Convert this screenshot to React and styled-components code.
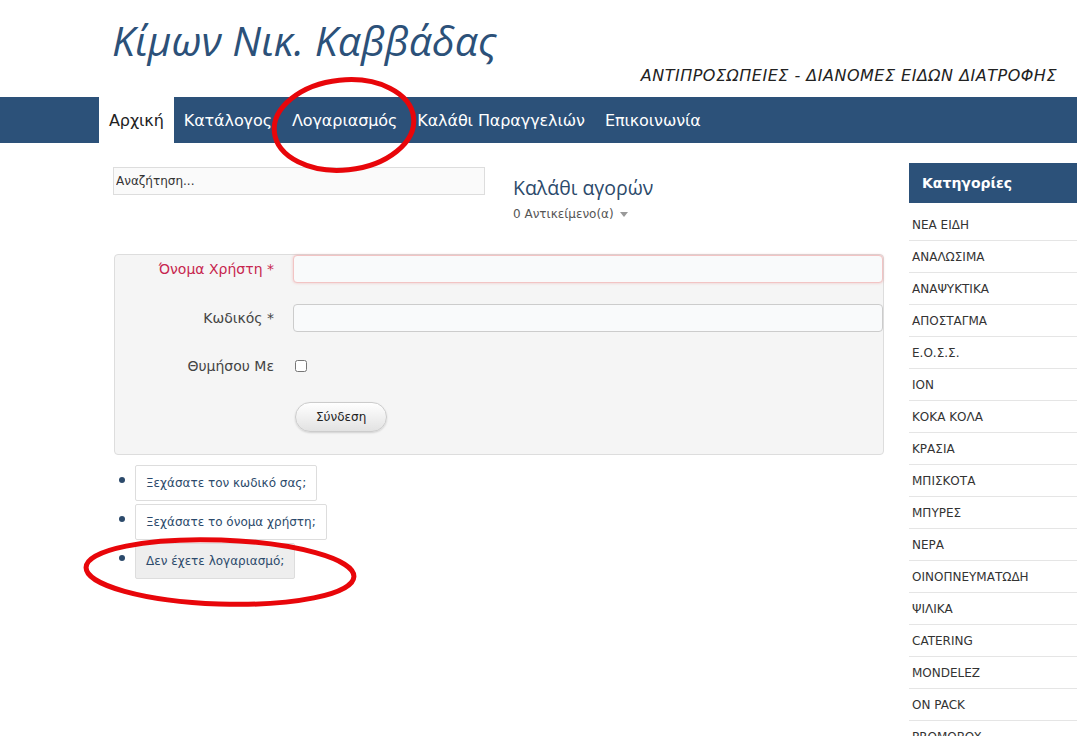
import React from 'react';
import styled, { createGlobalStyle } from 'styled-components';

const GlobalStyle = createGlobalStyle`
  html, body {
    margin: 0;
    padding: 0;
    background: #fff;
    overflow: hidden;
  }
  body {
    font-family: "DejaVu Sans", Verdana, sans-serif;
    color: #333;
  }
`;

const Page = styled.div`
  position: relative;
  width: 1077px;
  height: 736px;
  overflow: hidden;
`;

const Header = styled.header`
  height: 97px;
  padding: 0 20px 0 112px;
  box-sizing: border-box;
  display: flex;
  flex-direction: column;
`;

const SiteTitle = styled.h1`
  margin: 12px 0 0;
  font-family: "Open Sans", sans-serif;
  font-style: italic;
  font-weight: 400;
  font-size: 41px;
  line-height: 56px;
  color: #2c5179;
`;

const Slogan = styled.div`
  align-self: flex-end;
  margin-top: -2px;
  font-style: italic;
  font-size: 16px;
  letter-spacing: 0.5px;
  color: #222;
`;

const NavBar = styled.nav`
  height: 46px;
  background: #2c5179;
  display: flex;
  padding-left: 99px;
`;

const NavItem = styled.a`
  display: flex;
  align-items: center;
  padding: 0 10px;
  font-size: 16px;
  letter-spacing: -0.1px;
  color: ${({ $active }) => ($active ? '#222' : '#fff')};
  background: ${({ $active }) => ($active ? '#fff' : 'transparent')};
  text-decoration: none;
`;

const Body = styled.div`
  display: flex;
  padding-left: 113px;
  margin-top: 20px;
`;

const Main = styled.main`
  width: 771px;
`;

const TopRow = styled.div`
  display: flex;
  align-items: flex-start;
  gap: 28px;
`;

const Search = styled.input`
  width: 372px;
  height: 28px;
  box-sizing: border-box;
  margin-top: 4px;
  border: 1px solid #ddd;
  background: #fafafa;
  padding: 0 2px;
  font-family: "DejaVu Sans", Verdana, sans-serif;
  font-size: 12px;
  color: #333;
  &::placeholder {
    color: #333;
  }
`;

const Cart = styled.div`
  display: flex;
  flex-direction: column;
`;

const CartTitle = styled.div`
  margin-top: 11px;
  font-family: "Open Sans", sans-serif;
  font-size: 19.5px;
  color: #2c4a6b;
`;

const CartCount = styled.div`
  margin-top: 6px;
  font-size: 12px;
  color: #555;
  display: flex;
  align-items: center;
  gap: 6px;
`;

const Caret = styled.span`
  width: 0;
  height: 0;
  border-left: 4px solid transparent;
  border-right: 4px solid transparent;
  border-top: 5px solid #999;
`;

const Panel = styled.div`
  margin: 33px 0 0 1px;
  width: 770px;
  box-sizing: border-box;
  background: #f5f5f5;
  border: 1px solid #ddd;
  border-radius: 4px;
`;

const FormRow = styled.div`
  display: flex;
  align-items: center;
  height: ${({ $h }) => $h}px;
`;

const Label = styled.label`
  width: 159px;
  text-align: right;
  padding-right: 19px;
  font-size: 14px;
  color: ${({ $error }) => ($error ? '#c7254e' : '#444')};
`;

const TextInput = styled.input`
  flex: 1;
  height: 28px;
  box-sizing: border-box;
  border: 1px solid ${({ $error }) => ($error ? '#f2c4c4' : '#ccc')};
  border-radius: 4px;
  background: #f9fafb;
  box-shadow: ${({ $error }) => ($error ? '0 0 3px rgba(230,120,120,0.4)' : 'none')};
`;

const Check = styled.input`
  margin: 0 0 0 2px;
  width: 12px;
  height: 12px;
`;

const LoginButton = styled.button`
  margin-left: 180px;
  height: 30px;
  padding: 0 20px;
  border: 1px solid #ccc;
  border-radius: 15px;
  background: linear-gradient(#fff, #e2e2e2);
  font-family: "DejaVu Sans", Verdana, sans-serif;
  font-size: 12px;
  color: #222;
  box-shadow: 0 1px 2px rgba(0,0,0,0.15);
`;

const LinkList = styled.ul`
  margin: 10px 0 0;
  padding: 0 0 0 22px;
  list-style: none;
`;

const LinkItem = styled.li`
  display: flex;
  align-items: center;
  margin-bottom: 3px;
  &::before {
    content: '';
    width: 6px;
    height: 6px;
    border-radius: 50%;
    background: #2c4a6b;
    margin: 0 10px 6px -16px;
  }
`;

const LinkBox = styled.a`
  display: block;
  padding: 10px;
  border: 1px solid #ddd;
  border-radius: 2px;
  background: ${({ $active }) => ($active ? '#eee' : '#fff')};
  font-size: 12px;
  color: #2c4a6b;
`;

const Sidebar = styled.aside`
  margin-left: 25px;
  width: 170px;
`;

const SideHead = styled.div`
  height: 40px;
  background: #2c5179;
  color: #fff;
  font-weight: 700;
  font-size: 14px;
  display: flex;
  align-items: center;
  padding-left: 13px;
`;

const CatList = styled.ul`
  margin: 6px 0 0;
  padding: 0;
  list-style: none;
`;

const Cat = styled.li`
  height: 32px;
  box-sizing: border-box;
  border-bottom: 1px solid #e5e5e5;
  display: flex;
  align-items: center;
  padding-left: 3px;
  font-size: 12px;
  color: #333;
`;

const Marks = styled.svg`
  position: absolute;
  left: 0;
  top: 0;
  pointer-events: none;
`;

const cats = [
  'ΝΕΑ ΕΙΔΗ', 'ΑΝΑΛΩΣΙΜΑ', 'ΑΝΑΨΥΚΤΙΚΑ', 'ΑΠΟΣΤΑΓΜΑ', 'Ε.Ο.Σ.Σ.', 'ΙΟΝ',
  'ΚΟΚΑ ΚΟΛΑ', 'ΚΡΑΣΙΑ', 'ΜΠΙΣΚΟΤΑ', 'ΜΠΥΡΕΣ', 'ΝΕΡΑ', 'ΟΙΝΟΠΝΕΥΜΑΤΩΔΗ',
  'ΨΙΛΙΚΑ', 'CATERING', 'MONDELEZ', 'ON PACK', 'PROMOBOX',
];

const nav = ['Αρχική', 'Κατάλογος', 'Λογαριασμός', 'Καλάθι Παραγγελιών', 'Επικοινωνία'];

export default function App() {
  return (
    <Page>
      <GlobalStyle />
      <Header>
        <SiteTitle>Κίμων Νικ. Καββάδας</SiteTitle>
        <Slogan>ΑΝΤΙΠΡΟΣΩΠΕΙΕΣ - ΔΙΑΝΟΜΕΣ ΕΙΔΩΝ ΔΙΑΤΡΟΦΗΣ</Slogan>
      </Header>
      <NavBar>
        {nav.map((n, i) => (
          <NavItem key={n} $active={i === 0}>{n}</NavItem>
        ))}
      </NavBar>
      <Body>
        <Main>
          <TopRow>
            <Search placeholder="Αναζήτηση..." />
            <Cart>
              <CartTitle>Καλάθι αγορών</CartTitle>
              <CartCount>0 Αντικείμενο(α) <Caret /></CartCount>
            </Cart>
          </TopRow>
          <Panel>
            <FormRow $h={28}>
              <Label $error>Όνομα Χρήστη *</Label>
              <TextInput $error />
            </FormRow>
            <FormRow $h={69}>
              <Label>Κωδικός *</Label>
              <TextInput />
            </FormRow>
            <FormRow $h={28}>
              <Label>Θυμήσου Με</Label>
              <Check type="checkbox" />
            </FormRow>
            <FormRow $h={74}>
              <LoginButton>Σύνδεση</LoginButton>
            </FormRow>
          </Panel>
          <LinkList>
            <LinkItem><LinkBox>Ξεχάσατε τον κωδικό σας;</LinkBox></LinkItem>
            <LinkItem><LinkBox>Ξεχάσατε το όνομα χρήστη;</LinkBox></LinkItem>
            <LinkItem><LinkBox $active>Δεν έχετε λογαριασμό;</LinkBox></LinkItem>
          </LinkList>
        </Main>
        <Sidebar>
          <SideHead>Κατηγορίες</SideHead>
          <CatList>
            {cats.map((c) => <Cat key={c}>{c}</Cat>)}
          </CatList>
        </Sidebar>
      </Body>
      <Marks width="1077" height="736">
        <ellipse cx="344" cy="125" rx="70" ry="45" fill="none" stroke="#e8060a" strokeWidth="5" transform="rotate(-6 344 125)" />
        <ellipse cx="220" cy="572" rx="134" ry="32" fill="none" stroke="#e8060a" strokeWidth="5" transform="rotate(2 220 572)" />
      </Marks>
    </Page>
  );
}
